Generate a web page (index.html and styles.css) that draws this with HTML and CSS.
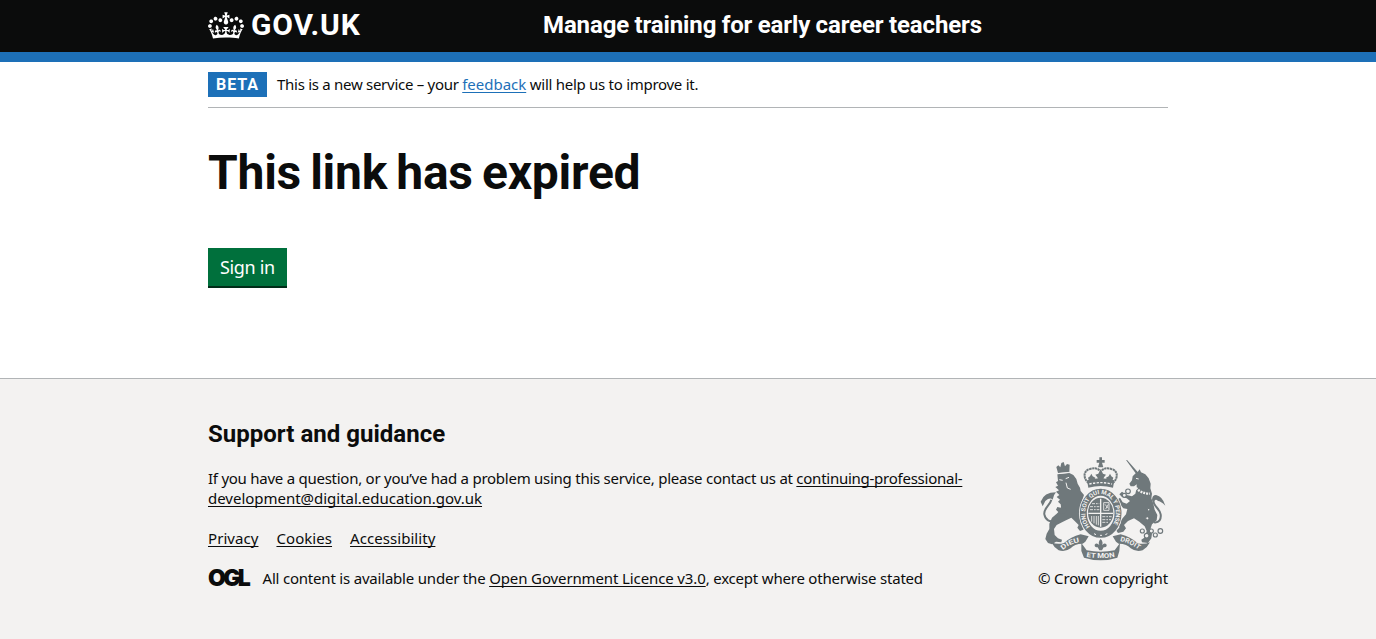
FILE: index.html
```
<!DOCTYPE html>
<html lang="en">
<head>
<meta charset="utf-8">
<title>This link has expired</title>
<link rel="stylesheet" href="styles.css">
</head>
<body>
<header class="header">
  <div class="container header-row">
    <a class="logo" href="#">
      <svg class="logo-crown" viewBox="0 0 132 97" width="36" height="27" aria-hidden="true"><path fill="currentColor" fill-rule="evenodd" d="M25 30.2c3.5 1.5 7.7-.2 9.1-3.7 1.5-3.6-.2-7.8-3.9-9.2-3.6-1.4-7.6.3-9.1 3.9-1.4 3.5.3 7.5 3.9 9zM9 39.5c3.6 1.5 7.8-.2 9.2-3.7 1.5-3.6-.2-7.8-3.9-9.1-3.6-1.5-7.6.2-9.1 3.8-1.4 3.5.3 7.5 3.8 9zM4.4 57.2c3.5 1.5 7.7-.2 9.1-3.8 1.5-3.6-.2-7.7-3.9-9.1-3.5-1.5-7.6.3-9.1 3.8-1.4 3.5.3 7.6 3.9 9.1zm38.3-21.4c3.5 1.5 7.7-.2 9.1-3.8 1.5-3.6-.2-7.7-3.9-9.1-3.6-1.5-7.6.3-9.1 3.8-1.3 3.6.4 7.7 3.9 9.1zm64.4-5.6c-3.6 1.5-7.8-.2-9.1-3.7-1.5-3.6.2-7.8 3.8-9.2 3.6-1.4 7.7.3 9.2 3.9 1.3 3.5-.4 7.5-3.9 9zm15.9 9.3c-3.6 1.5-7.7-.2-9.1-3.7-1.5-3.6.2-7.8 3.7-9.1 3.6-1.5 7.7.2 9.2 3.8 1.5 3.5-.3 7.5-3.8 9zm4.7 17.7c-3.6 1.5-7.8-.2-9.2-3.8-1.5-3.6.2-7.7 3.9-9.1 3.6-1.5 7.7.3 9.2 3.8 1.3 3.5-.4 7.6-3.9 9.1zM89.3 35.8c-3.6 1.5-7.8-.2-9.2-3.8-1.4-3.6.2-7.7 3.9-9.1 3.6-1.5 7.7.3 9.2 3.8 1.4 3.6-.3 7.7-3.9 9.1zM69.7 17.7l8.9 4.7V9.3l-8.9 2.8c-.2-.3-.5-.6-.9-.9L72.4 0H59.6l3.5 11.2c-.3.3-.6.5-.9.9l-8.8-2.8v13.1l8.8-4.7c.3.3.6.7.9.9l-5 15.4v.1c-.2.8-.4 1.6-.4 2.4 0 4.1 3.1 7.5 7 8.1h.2c.3 0 .7.1 1 .1.4 0 .7 0 1-.1h.2c4-.6 7.1-4.1 7.1-8.1 0-.8-.1-1.7-.4-2.4V34l-5.1-15.4c.4-.2.7-.6 1-.9zM66 92.8c16.9 0 32.8 1.1 47.1 3.2 4-16.9 8.9-26.7 14-33.5l-9.6-3.4c1 4.9 1.1 7.2 0 10.2-1.5-1.4-3-4.3-4.2-8.7L108.6 76c2.8-2 5-3.2 7.5-3.3-4.4 9.4-10 11.9-13.6 11.2-4.3-.8-6.3-4.6-5.6-7.9 1-4.7 5.7-5.9 8-.5 4.3-8.7-3-11.4-7.6-8.8 7.1-7.2 7.9-13.5 2.1-21.1-8 6.1-8.1 12.3-4.5 20.8-4.7-5.4-12.1-2.5-9.5 6.2 3.4-5.2 7.9-2 7.2 3.1-.6 4.3-6.4 7.8-13.5 7.2-10.3-.9-10.9-8-11.2-13.8 2.5-.5 7.1 1.8 11 7.3L80.2 60c-4.1 4.4-8 5.3-12.3 5.4 1.4-4.4 8-11.6 8-11.6H55.5s6.4 7.2 7.9 11.6c-4.2-.1-8-1-12.3-5.4l1.4 16.4c3.9-5.5 8.5-7.7 10.9-7.3-.3 5.8-.9 12.8-11.1 13.8-7.2.6-12.9-2.9-13.5-7.2-.7-5 3.8-8.3 7.1-3.1 2.7-8.7-4.6-11.6-9.4-6.2 3.7-8.5 3.6-14.7-4.6-20.8-5.8 7.6-5 13.9 2.2 21.1-4.7-2.6-11.9.1-7.7 8.8 2.3-5.5 7.1-4.2 8.1.5.7 3.3-1.3 7.1-5.7 7.9-3.5.7-9-1.8-13.5-11.2 2.5.1 4.7 1.3 7.5 3.3l-4.7-15.4c-1.2 4.4-2.7 7.2-4.3 8.7-1.1-3-.9-5.3 0-10.2l-9.5 3.4c5 6.9 9.9 16.7 14 33.5 14.8-2.1 30.8-3.2 47.7-3.2z"/></svg>
      <span class="logo-text">GOV.UK</span>
    </a>
    <a class="service" href="#">Manage training for early career teachers</a>
  </div>
</header>
<div class="page">
  <div class="container">
    <div class="phase">
      <strong class="tag">BETA</strong>
      <span class="phase-text">This is a new service – your <a class="link" href="#">feedback</a> will help us to improve it.</span>
    </div>
    <main class="main">
      <h1 class="title">This link has expired</h1>
      <a class="button" href="#">Sign in</a>
    </main>
  </div>
</div>
<footer class="footer">
  <div class="container footer-row">
    <div class="footer-body">
      <h2 class="footer-title">Support and guidance</h2>
      <p class="footer-help">If you have a question, or you’ve had a problem using this service, please contact us at <a class="footer-link" href="#">continuing-professional-<br><span class="email-rest">development@digital.education.gov.uk</span></a></p>
      <ul class="footer-list">
        <li><a class="footer-link" href="#">Privacy</a></li>
        <li><a class="footer-link" href="#">Cookies</a></li>
        <li><a class="footer-link" href="#">Accessibility</a></li>
      </ul>
      <div class="licence">
        <span class="ogl">OGL</span>
        <span class="licence-text">All content is available under the <a class="footer-link licence-link" href="#">Open Government Licence v3.0</a>, except where otherwise stated</span>
      </div>
    </div>
    <a class="copyright" href="#">
      <svg class="crest" viewBox="24 15 390 318" width="130" height="106" aria-hidden="true">
        <g fill="currentColor">
          <!-- lion -->
          <path d="M84 66L79 48L85 43L91 49L94 36L101 33L105 46L111 39L119 41L118 64Z"/>
          <path d="M82 70L118 66L130 72L139 84L143 98L150 110L152 120L162 132L156 150L150 168L152 190L158 206L168 222L160 236L150 240L142 230L146 222L134 210L124 200L108 208L96 214L80 222L72 234L74 252L84 262L96 266L94 274L78 272L66 280L54 276L46 264L50 248L58 234L58 218L66 200L80 188L94 174L92 160L84 152L90 146L80 138L88 132L78 122L87 118L76 108L84 104L78 94L84 90Z"/>
          <path d="M98 160L112 176L104 188L88 186L78 176L82 168L92 170Z"/>
          <!-- unicorn -->
          <path d="M288 27L292 28L323 63L329 55L333 64L346 70L356 82L362 98L361 112L366 128L364 142L370 158L374 176L382 192L380 208L366 220L362 232L366 248L364 262L354 276L336 274L334 266L346 258L350 240L344 226L328 212L312 202L294 210L282 222L288 232L280 242L264 246L258 238L268 230L266 220L276 204L288 190L292 174L280 172L268 158L262 146L270 140L278 154L290 158L300 150L290 142L276 138L268 130L276 122L290 132L306 136L316 128L320 112L320 100L312 106L302 106L298 98L306 88L308 76L317 67Z"/>
          <!-- crown -->
          <path d="M208 19h8v8h8v8h-8l4 14h-16l4-14h-8v-8h8zM171 88q41-12 82 0l-4 22q-37-10-74 0z"/>
          <path d="M212 54l7 14 9 3-6 8-4 12h-12l-4-12-6-8 9-3zM184 68l4 8 8 4-6 12h-12l-4-12 6-4zM240 68l-4 8-8 4 6 12h12l4-12-6-4z"/>
        </g>
        <g fill="none" stroke="currentColor">
          <path stroke-width="6" d="M74 208C60 216 46 206 43 190C40 172 60 164 64 146"/>
          <path fill="currentColor" stroke="none" d="M32 152Q42 124 78 124Q70 132 68 146Q60 138 46 150L38 166Z"/>
          <path stroke-width="6" d="M372 214C388 216 394 204 392 190C390 172 368 166 370 146"/>
          <path fill="currentColor" stroke="none" d="M366 148Q366 132 378 132Q398 136 406 164Q392 150 384 150Q376 142 372 152Z"/>
          <path stroke-width="6" stroke-dasharray="7 1.5" d="M176 96C158 82 160 58 180 54C194 50 204 52 210 60M248 96C266 82 264 58 244 54C230 50 220 52 214 60"/>
        </g>
        <!-- chain -->
        <g fill="#f3f2f1" stroke="currentColor" stroke-width="3.5"><circle cx="337" cy="240" r="6"/><circle cx="350" cy="254" r="7"/><circle cx="364" cy="240" r="6"/><circle cx="376" cy="252" r="6"/><circle cx="391" cy="240" r="7"/><circle cx="294" cy="121" r="7"/><circle cx="283" cy="133" r="6"/><circle cx="352" cy="202" r="5"/><circle cx="356" cy="176" r="4"/></g>
        <!-- garter and shield -->
        <ellipse cx="212" cy="187" rx="65" ry="77" fill="#f3f2f1"/>
        <ellipse cx="212" cy="187" rx="52" ry="63" fill="none" stroke="currentColor" stroke-width="21"/>
        <ellipse cx="212" cy="185" rx="38" ry="45" fill="currentColor"/>
        <g fill="none" stroke="#f3f2f1">
          <path stroke-width="4" d="M212 143v84M175 187h74"/>
          <path stroke-width="2.5" stroke-dasharray="9 3 5 3" d="M186 158h22M180 167h28M180 176h28M217 197h28M217 206h26M217 214h20"/>
          <path stroke-width="2.5" d="M221 155h16v23h-16zM225 160l10 12M235 160l-8 14M185 195v17M192 195v22M199 195v26M205 195v28"/>
          <path stroke-width="4" d="M178 99q34-8 68 0" stroke-dasharray="7 4"/>
          <path stroke-width="7" d="M318 110q14 18 42 18" stroke-dasharray="6 3"/>
          <path stroke-width="3" d="M82 68l36-4M88 86l10 2M107 83l10-4M108 95l4 16l10 4M318 82l8 2M192 248l6 3M210 253h6M226 251l6-3"/>
        </g>
        <path id="garter" d="M180 227A46 57 0 1 1 244 227" fill="none"/>
        <text class="motto motto-garter"><textPath href="#garter" textLength="240" lengthAdjust="spacingAndGlyphs">HONI SOIT QUI MAL Y PENSE</textPath></text>
        <!-- motto ribbon -->
        <g fill="currentColor">
          <path d="M64 274Q84 282 102 276Q122 258 152 250L176 256L166 272L158 278Q132 278 122 292Q106 304 86 298Q72 290 64 274Z"/>
          <path d="M360 274Q340 282 322 276Q302 258 272 250L248 256L258 272L266 278Q292 278 302 292Q318 304 338 298Q352 290 360 274Z"/>
          <path d="M154 276L170 298Q212 306 254 298L270 276L268 300L262 320Q212 336 162 320L154 300Z"/>
          <path d="M212 264q9 10 4 18 8-9 14-1 1 8-9 8l-5 9h-8l-5-9q-10 0-9-8 6-8 14 1-5-8 4-18z"/>
        </g>
        <path id="ribbon-left" d="M99 297Q118 278 155 272" fill="none"/>
        <path id="ribbon-mid" d="M169 317Q212 326 255 317" fill="none"/>
        <path id="ribbon-right" d="M270 270Q304 277 328 298" fill="none"/>
        <text class="motto"><textPath href="#ribbon-left" textLength="56" lengthAdjust="spacingAndGlyphs">DIEU</textPath></text>
        <text class="motto"><textPath href="#ribbon-mid" textLength="86" lengthAdjust="spacingAndGlyphs">ET MON</textPath></text>
        <text class="motto"><textPath href="#ribbon-right" textLength="62" lengthAdjust="spacingAndGlyphs">DROIT</textPath></text>
      </svg>
      <span class="copyright-text">© Crown copyright</span>
    </a>
  </div>
</footer>
</body>
</html>
```
FILE: styles.css
```
* { box-sizing: border-box; }
body {
  margin: 0;
  background: #f3f2f1;
  color: #0b0c0c;
  font: 15px/20px "Noto Sans", sans-serif;
  min-height: 639px;
  display: flex;
  flex-direction: column;
}
a { color: inherit; text-decoration: none; }
.container { width: 960px; margin: 0 auto; }
.header { height: 62px; background: #0b0c0c; border-bottom: 10px solid #1d70b8; color: #fff; }
.header-row { display: flex; height: 52px; }
.logo { width: 335px; display: flex; padding-top: 11px; }
.logo-crown { margin-top: 0.5px; }
.logo-text { font: bold 30px/28px "Roboto", sans-serif; margin-left: 7px; letter-spacing: 0.8px; }
.service { font: bold 24px/30px "Roboto", sans-serif; padding-top: 10px; white-space: nowrap; letter-spacing: -0.12px; word-spacing: -0.4px; }
.page { background: #fff; height: 316px; }
.phase { display: flex; height: 46px; padding-top: 10px; border-bottom: 1px solid #b1b4b6; }
.tag { background: #1d70b8; color: #fff; font: bold 16px/25px "Roboto", sans-serif; width: 59px; height: 25px; padding-left: 8px; margin-right: 10px; letter-spacing: 0.95px; }
.phase-text { padding-top: 2px; white-space: nowrap; letter-spacing: -0.28px; }
.link, .footer-link { text-decoration: underline; text-underline-offset: 2px; text-decoration-thickness: 1px; text-decoration-skip-ink: none; }
.link { color: #1d70b8; letter-spacing: -0.02px; }
.main { padding-top: 40px; display: flex; flex-direction: column; align-items: flex-start; }
.title { margin: 0 0 50px; font: bold 48px/50px "Roboto", sans-serif; letter-spacing: -0.25px; word-spacing: -2.5px; }
.button { background: #00703c; color: #fff; box-shadow: 0 2px 0 #002d18; font-size: 18px; line-height: 38px; height: 38px; width: 79px; padding-left: 12px; white-space: nowrap; letter-spacing: -0.35px; }
.footer { flex: 1; border-top: 1px solid #b1b4b6; background: #f3f2f1; }
.footer-row { display: flex; justify-content: space-between; padding-top: 40px; }
.footer-title { margin: 0 0 19px; font: bold 24px/30px "Roboto", sans-serif; letter-spacing: 0.02px; }
.footer-help { margin: 0 0 20px; white-space: nowrap; letter-spacing: -0.255px; }
.email-rest { letter-spacing: -0.02px; }
.footer-list { list-style: none; display: flex; gap: 18px; margin: 0 0 20px; padding: 0; letter-spacing: 0.06px; }
.licence { display: flex; white-space: nowrap; }
.ogl { font: 900 23px/20px "Inter", sans-serif; letter-spacing: -2.7px; width: 54px; }
.licence-text { letter-spacing: -0.2px; padding-left: 0.5px; }
.licence-link { letter-spacing: -0.12px; }
.copyright { width: 131px; padding-top: 37px; display: flex; flex-direction: column; white-space: nowrap; margin-right: -1px; }
.crest { display: block; color: #6f787b; margin: 0 0 6px; }
.copyright-text { letter-spacing: -0.137px; }
.motto { font: bold 20px "Roboto", sans-serif; fill: #f3f2f1; }
.motto-garter { font-size: 18px; }
```
